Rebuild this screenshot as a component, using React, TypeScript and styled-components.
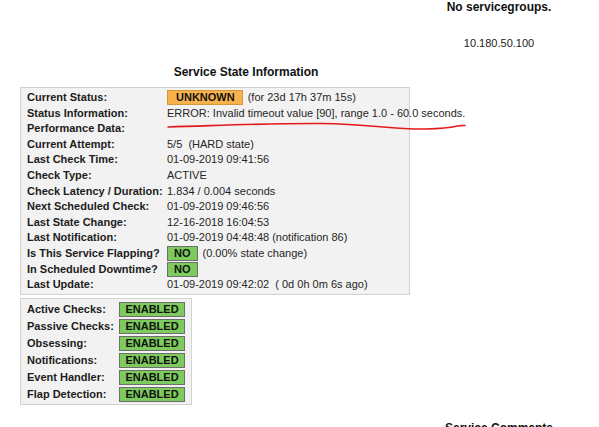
import { Fragment } from "react";
import styled, { createGlobalStyle } from "styled-components";

const GlobalStyle = createGlobalStyle`
  html, body {
    margin: 0;
    padding: 0;
    background: #ffffff;
  }
  body {
    font-family: "Liberation Sans", Arial, sans-serif;
    color: #1a1a1a;
    overflow: hidden;
  }
`;

const Page = styled.div`
  width: 599px;
  height: 427px;
  display: flex;
  flex-direction: column;
`;

const SideBlock = styled.div<{ $top?: number }>`
  width: 200px;
  margin-left: auto;
  margin-top: ${(p) => p.$top ?? 0}px;
  display: flex;
  flex-direction: column;
  align-items: center;
`;

const Heading = styled.div`
  font-size: 12px;
  font-weight: 700;
  line-height: 15px;
  color: #111;
`;

const HostAddress = styled.div`
  font-size: 11px;
  line-height: 15px;
  margin-top: 21px;
  color: #222;
`;

const Title = styled.div`
  width: 492px;
  margin-top: 14px;
  text-align: center;
  font-size: 12px;
  font-weight: 700;
  line-height: 15px;
  color: #111;
`;

const InfoPanel = styled.div`
  position: relative;
  margin: 7px 0 0 20px;
  width: 376px;
  padding: 2px 6px 1px 6px;
  background: #f2f2f2;
  border: 1px solid #d2d2d2;
  display: grid;
  grid-template-columns: 138px auto;
  column-gap: 2px;
  font-size: 11px;
  line-height: 15.6px;
`;

const Label = styled.div`
  font-weight: 700;
  color: #1c1c1c;
  white-space: nowrap;
`;

const Value = styled.div`
  color: #262626;
  white-space: pre;
  display: flex;
  align-items: center;
  gap: 5px;
`;

const Badge = styled.span<{ $tone: "warn" | "ok" }>`
  display: inline-block;
  box-sizing: border-box;
  height: 15px;
  line-height: 13px;
  padding: ${(p) => (p.$tone === "warn" ? "0 7px 0 8px" : "0 6px")};
  font-weight: 700;
  color: #111;
  background: ${(p) => (p.$tone === "warn" ? "#f8b24c" : "#7ccb5c")};
  border: 1px solid ${(p) => (p.$tone === "warn" ? "#d7963c" : "#6e6e6e")};
`;

const Scribble = styled.svg`
  position: absolute;
  left: 0;
  top: 0;
  width: 460px;
  height: 60px;
  overflow: visible;
  pointer-events: none;
`;

const FlagsPanel = styled.div`
  margin: 3px 0 0 20px;
  width: 158px;
  padding: 3px 6px 2px 6px;
  background: #f2f2f2;
  border: 1px solid #d2d2d2;
  display: grid;
  grid-template-columns: 90px 66px;
  column-gap: 2px;
  row-gap: 2px;
  font-size: 11px;
  line-height: 15px;
`;

const Enabled = styled.span`
  box-sizing: border-box;
  height: 15px;
  line-height: 13px;
  text-align: center;
  font-weight: 700;
  color: #111;
  background: #7ccb5c;
  border: 1px solid #6e6e6e;
`;

const rows: [string, React.ReactNode][] = [
  [
    "Current Status:",
    <>
      <Badge $tone="warn">UNKNOWN</Badge>
      {"(for 23d 17h 37m 15s)"}
    </>,
  ],
  ["Status Information:", "ERROR: Invalid timeout value [90], range 1.0 - 60.0 seconds."],
  ["Performance Data:", ""],
  ["Current Attempt:", "5/5  (HARD state)"],
  ["Last Check Time:", "01-09-2019 09:41:56"],
  ["Check Type:", "ACTIVE"],
  ["Check Latency / Duration:", "1.834 / 0.004 seconds"],
  ["Next Scheduled Check:", "01-09-2019 09:46:56"],
  ["Last State Change:", "12-16-2018 16:04:53"],
  ["Last Notification:", "01-09-2019 04:48:48 (notification 86)"],
  [
    "Is This Service Flapping?",
    <>
      <Badge $tone="ok">NO</Badge>
      {"(0.00% state change)"}
    </>,
  ],
  ["In Scheduled Downtime?", <Badge $tone="ok">NO</Badge>],
  ["Last Update:", "01-09-2019 09:42:02  ( 0d 0h 0m 6s ago)"],
];

const flags = [
  "Active Checks:",
  "Passive Checks:",
  "Obsessing:",
  "Notifications:",
  "Event Handler:",
  "Flap Detection:",
];

export default function App() {
  return (
    <Page>
      <GlobalStyle />
      <SideBlock>
        <Heading>No servicegroups.</Heading>
        <HostAddress>10.180.50.100</HostAddress>
      </SideBlock>
      <Title>Service State Information</Title>
      <InfoPanel>
        {rows.map(([label, value]) => (
          <Fragment key={label}>
            <Label>{label}</Label>
            <Value>{value}</Value>
          </Fragment>
        ))}
        <Scribble viewBox="0 0 460 60">
          <path
            d="M147 39 C 200 37.5, 250 35, 300 35.5 S 370 41.5, 405 41 S 432 37, 444 37.5"
            fill="none"
            stroke="#e3191c"
            strokeWidth="1.6"
            strokeLinecap="round"
          />
        </Scribble>
      </InfoPanel>
      <FlagsPanel>
        {flags.map((f) => (
          <Fragment key={f}>
            <Label>{f}</Label>
            <Enabled>ENABLED</Enabled>
          </Fragment>
        ))}
      </FlagsPanel>
      <SideBlock $top={16}>
        <Heading>Service Comments</Heading>
      </SideBlock>
    </Page>
  );
}
